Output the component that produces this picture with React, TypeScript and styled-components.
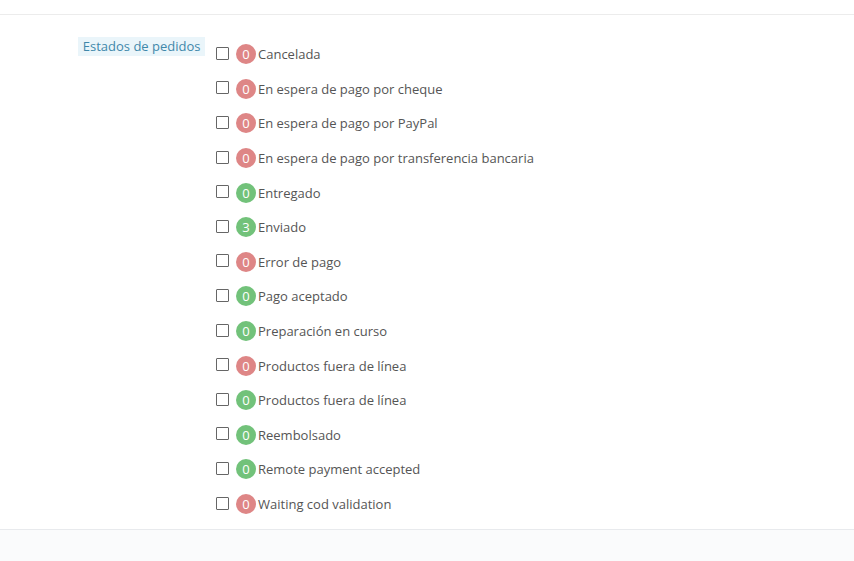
import React from "react";
import styled, { createGlobalStyle } from "styled-components";

const Global = createGlobalStyle`
  html, body { margin: 0; padding: 0; background: #fff; }
  body { font-family: "Open Sans", "Liberation Sans", sans-serif; font-size: 13px; color: #555; }
`;

const Page = styled.div`
  display: flex;
  flex-direction: column;
  min-height: 561px;
`;

const TopStrip = styled.div`
  height: 14px;
  border-bottom: 1px solid #ececec;
`;

const Panel = styled.div`
  display: flex;
  padding: 22px 0 8px 0;
  border-bottom: 1px solid #e8eaed;
`;

const LabelCol = styled.div`
  width: 205px;
  display: flex;
  justify-content: flex-end;
  align-items: flex-start;
  flex-shrink: 0;
`;

const Label = styled.span`
  height: 19px;
  line-height: 19px;
  padding: 0 4.5px;
  background: #eaf5fa;
  color: #3f88aa;
  font-size: 13px;
  white-space: nowrap;
`;

const List = styled.div`
  display: flex;
  flex-direction: column;
  margin-left: 11px;
`;

const Row = styled.label`
  display: flex;
  align-items: center;
  height: 34.6px;
  color: #555;
`;

const Box = styled.span`
  width: 11px;
  height: 11px;
  border: 1px solid #666;
  border-radius: 1px;
  background: #fff;
  margin-right: 7px;
  margin-top: -2px;
`;

const Badge = styled.span<{ $ok: boolean }>`
  width: 20px;
  height: 20px;
  border-radius: 50%;
  background: ${(p) => (p.$ok ? "#72c27a" : "#de8686")};
  color: #fff;
  display: flex;
  align-items: center;
  justify-content: center;
  font-size: 13px;
  margin-right: 2px;
`;

const Text = styled.span`
  white-space: nowrap;
`;

const Footer = styled.div`
  flex: 1;
  background: #fafbfc;
`;

const items: [string, string, boolean][] = [
  ["0", "Cancelada", false],
  ["0", "En espera de pago por cheque", false],
  ["0", "En espera de pago por PayPal", false],
  ["0", "En espera de pago por transferencia bancaria", false],
  ["0", "Entregado", true],
  ["3", "Enviado", true],
  ["0", "Error de pago", false],
  ["0", "Pago aceptado", true],
  ["0", "Preparación en curso", true],
  ["0", "Productos fuera de línea", false],
  ["0", "Productos fuera de línea", true],
  ["0", "Reembolsado", true],
  ["0", "Remote payment accepted", true],
  ["0", "Waiting cod validation", false],
];

export default function App() {
  return (
    <Page>
      <Global />
      <TopStrip />
      <Panel>
        <LabelCol>
          <Label>Estados de pedidos</Label>
        </LabelCol>
        <List>
          {items.map(([n, t, ok], i) => (
            <Row key={i}>
              <Box />
              <Badge $ok={ok}>{n}</Badge>
              <Text>{t}</Text>
            </Row>
          ))}
        </List>
      </Panel>
      <Footer />
    </Page>
  );
}
